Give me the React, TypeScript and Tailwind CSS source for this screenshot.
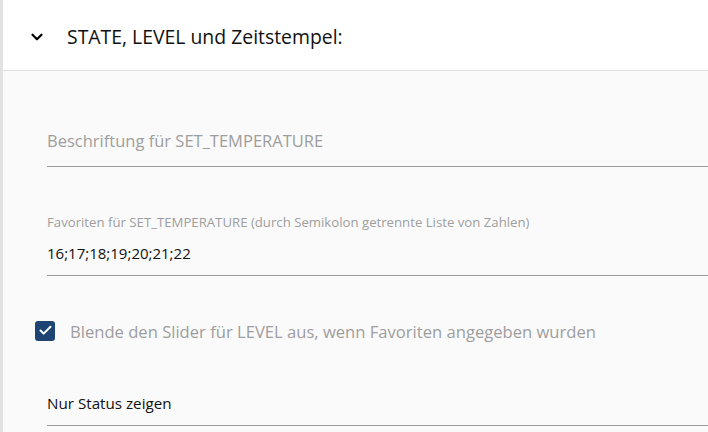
import { ChevronDown, Check } from 'lucide-react'

export default function App() {
  return (
    <div className="w-[708px] h-[432px] overflow-hidden flex border-l-[3px] border-[#e2e2e2] font-['Open_Sans',sans-serif]">
      <div className="flex-1 flex flex-col">
        {/* Header */}
        <div className="h-[71px] shrink-0 bg-white border-b border-[#dedede] flex items-center pl-[25px] pt-[3px]">
          <ChevronDown className="w-[18px] h-[18px] text-black" strokeWidth={3} />
          <span className="ml-[21px] text-[19.4px] text-[#111]">STATE, LEVEL und Zeitstempel:</span>
        </div>

        {/* Content */}
        <div className="flex-1 bg-[#fafafa] pl-[44px]">
          {/* Beschriftung */}
          <div className="h-[96px] flex items-end border-b border-[#9a9a9a] pb-[13px]">
            <span className="text-[16.5px] leading-6 text-[#9e9e9e]">Beschriftung für SET_TEMPERATURE</span>
          </div>

          {/* Favoriten */}
          <div className="h-[109px] flex flex-col justify-end border-b border-[#9a9a9a] pb-[10px]">
            <span className="text-[13.2px] leading-4 text-[#9e9e9e]">
              Favoriten für SET_TEMPERATURE (durch Semikolon getrennte Liste von Zahlen)
            </span>
            <span className="mt-[11px] text-[15px] leading-6 text-[#111]">16;17;18;19;20;21;22</span>
          </div>

          {/* Checkbox */}
          <div className="h-[110px] flex items-center -ml-[12px] pb-[1px]">
            <div className="w-[20px] h-[20px] rounded-[3px] bg-[#1d4472] flex items-center justify-center">
              <Check className="w-[15px] h-[15px] text-white" strokeWidth={3.2} />
            </div>
            <span className="ml-[15px] pt-[3px] text-[16.6px] text-[#9e9e9e]">
              Blende den Slider für LEVEL aus, wenn Favoriten angegeben wurden
            </span>
          </div>

          {/* Nur Status */}
          <div className="h-[40px] flex items-end border-b border-[#9a9a9a] pb-[10px]">
            <span className="text-[15.2px] leading-6 text-[#111]">Nur Status zeigen</span>
          </div>
        </div>
      </div>
    </div>
  )
}
